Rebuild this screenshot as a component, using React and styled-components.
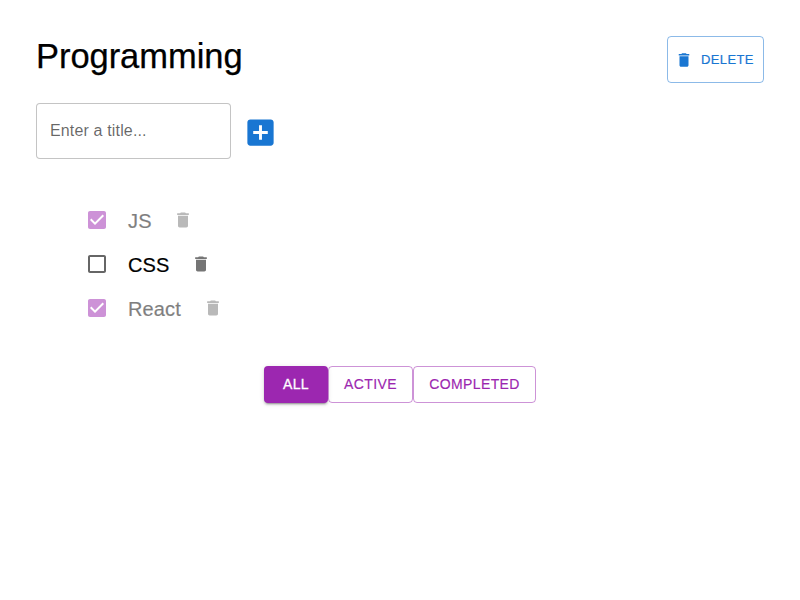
import React from "react";
import styled, { createGlobalStyle } from "styled-components";

const Global = createGlobalStyle`
  * { box-sizing: border-box; }
  body { margin: 0; background: #fff; color: #000; font-family: "Liberation Sans", Arial, sans-serif; }
`;

const Page = styled.main`
  width: 800px;
  height: 600px;
  padding: 36px;
  display: flex;
  flex-direction: column;
`;

const Header = styled.header`
  display: flex;
  justify-content: space-between;
  align-items: flex-start;
  height: 47px;
`;

const Title = styled.h1`
  margin: 0;
  font-size: 34.5px;
  font-weight: 400;
  line-height: 40px;
  letter-spacing: -0.05px;
  -webkit-text-stroke: 0.25px;
`;

const Icon = styled.svg`
  display: block;
  flex: none;
  width: ${(p) => p.$size}px;
  height: ${(p) => p.$size}px;
  fill: ${(p) => p.$color};
`;

const DeleteButton = styled.button`
  display: flex;
  align-items: center;
  gap: 8px;
  width: 97px;
  height: 47px;
  padding: 0 0 0 7px;
  border: 1px solid rgba(25, 118, 210, 0.5);
  border-radius: 4px;
  background: transparent;
  color: #1976d2;
  font: 400 13px/23px "Liberation Sans", Arial, sans-serif;
  letter-spacing: 0.37px;
  -webkit-text-stroke: 0.2px;
`;

const Form = styled.form`
  display: flex;
  align-items: center;
  gap: 12px;
  margin-top: 20px;
`;

const Field = styled.input`
  width: 195px;
  height: 56px;
  padding: 0 13px;
  border: 1px solid rgba(0, 0, 0, 0.23);
  border-radius: 4px;
  font: 400 16px/23px "Liberation Sans", Arial, sans-serif;
  letter-spacing: 0.15px;
  &::placeholder { color: rgba(0, 0, 0, 0.6); opacity: 1; }
`;

const AddButton = styled.button`
  margin: 3px 0 0;
  padding: 0;
  border: 0;
  background: transparent;
`;

const Tasks = styled.ul`
  list-style: none;
  margin: 39px 0 0;
  padding: 0 0 0 49px;
`;

const Task = styled.li`
  display: flex;
  align-items: center;
  height: 44px;
  opacity: ${(p) => (p.$done ? 0.5 : 1)};
`;

const TaskText = styled.span`
  margin: 2px 21.8px 0 19px;
  font-size: 20px;
  line-height: 24px;
  letter-spacing: 0.13px;
  -webkit-text-stroke: 0.2px;
`;

const Filters = styled.div`
  display: flex;
  justify-content: center;
  margin-top: 36px;
`;

const FilterButton = styled.button`
  width: ${(p) => p.$width}px;
  height: 36.5px;
  padding: 0 0 1px;
  border: ${(p) => (p.$active ? "0" : "1px solid rgba(156, 39, 176, 0.5)")};
  border-radius: 4px;
  background: ${(p) => (p.$active ? "#9c27b0" : "transparent")};
  color: ${(p) => (p.$active ? "#fff" : "#9c27b0")};
  box-shadow: ${(p) => (p.$active ? "0 3px 1px -2px rgba(0,0,0,.2), 0 2px 2px rgba(0,0,0,.14), 0 1px 5px rgba(0,0,0,.12)" : "none")};
  font: 400 14px/24px "Liberation Sans", Arial, sans-serif;
  letter-spacing: 0.4px;
  -webkit-text-stroke: ${(p) => (p.$active ? "0.3px" : "0.15px")};
`;

const shapes = {
  trash: "M6 19c0 1.1.9 2 2 2h8c1.1 0 2-.9 2-2V7H6v12zM19 4h-3.5l-1-1h-5l-1 1H5v2h14V4z",
  add: "M19 3H5c-1.11 0-2 .9-2 2v14c0 1.1.89 2 2 2h14c1.1 0 2-.9 2-2V5c0-1.1-.9-2-2-2zm-2 10h-4v4h-2v-4H7v-2h4V7h2v4h4v2z",
  checked: "M19 3H5c-1.11 0-2 .9-2 2v14c0 1.1.89 2 2 2h14c1.11 0 2-.9 2-2V5c0-1.1-.89-2-2-2zm-9 14l-5-5 1.41-1.41L10 14.17l7.59-7.59L19 8l-9 9z",
  unchecked: "M19 5v14H5V5h14m0-2H5c-1.1 0-2 .9-2 2v14c0 1.1.9 2 2 2h14c1.1 0 2-.9 2-2V5c0-1.1-.9-2-2-2z",
};

const Glyph = ({ name, size, color }) => (
  <Icon viewBox="0 0 24 24" $size={size} $color={color} aria-hidden="true">
    <path d={shapes[name]} />
  </Icon>
);

const tasks = [
  { title: "JS", done: true },
  { title: "CSS", done: false },
  { title: "React", done: true },
];

export default function App() {
  return (
    <Page>
      <Global />
      <Header>
        <Title>Programming</Title>
        <DeleteButton><Glyph name="trash" size={18} color="#1976d2" />DELETE</DeleteButton>
      </Header>
      <Form>
        <Field placeholder="Enter a title..." />
        <AddButton type="button" aria-label="Add"><Glyph name="add" size={35} color="#1976d2" /></AddButton>
      </Form>
      <Tasks>
        {tasks.map((t) => (
          <Task key={t.title} $done={t.done}>
            <Glyph name={t.done ? "checked" : "unchecked"} size={24} color={t.done ? "#9c27b0" : "#666"} />
            <TaskText>{t.title}</TaskText>
            <Glyph name="trash" size={20} color="#757575" />
          </Task>
        ))}
      </Tasks>
      <Filters>
        <FilterButton $active $width={64}>ALL</FilterButton>
        <FilterButton $width={85}>ACTIVE</FilterButton>
        <FilterButton $width={123}>COMPLETED</FilterButton>
      </Filters>
    </Page>
  );
}
